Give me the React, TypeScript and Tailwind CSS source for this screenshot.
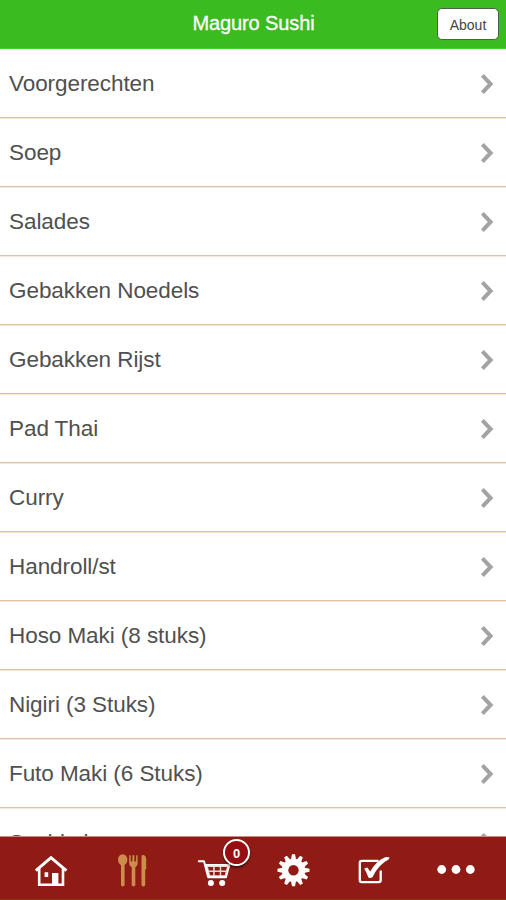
import React from 'react';

const categories = [
  'Voorgerechten',
  'Soep',
  'Salades',
  'Gebakken Noedels',
  'Gebakken Rijst',
  'Pad Thai',
  'Curry',
  'Handroll/st',
  'Hoso Maki (8 stuks)',
  'Nigiri (3 Stuks)',
  'Futo Maki (6 Stuks)',
  'Sashimi',
];

const gearTeeth = Array.from({ length: 12 }, (_, i) => i * 30);

const Chevron = () => (
  <svg width="14" height="22" viewBox="0 0 14 22" fill="none" stroke="#a3a3a3" strokeWidth="4">
    <path d="M2.4 2.4 10.6 11 2.4 19.6" />
  </svg>
);

const HomeIcon = () => (
  <svg width="41" height="40" viewBox="0 0 41 40" fill="none">
    <path d="M5.8 20.6 21 7.6 36.4 20.6" stroke="#fff" strokeWidth="3" />
    <path d="M9.2 18.5V34.8H33V18.5" stroke="#fff" strokeWidth="2.6" />
    <path d="M14.6 22.3h3.6v4.6h-3.6z M22 23h6.4v12.5H22z" fill="#fff" />
  </svg>
);

const UtensilsIcon = () => (
  <svg width="41" height="40" viewBox="0 0 41 40" fill="#cd8d4d">
    <ellipse cx="11.7" cy="9.8" rx="4.7" ry="5.6" />
    <rect x="10" y="13" width="3.6" height="23.4" rx="1.6" />
    <path d="M18.2 5.3h1.5v6.2h1.7V5.3h2v6.2h1.7V5.3h1.5v8c0 2-1 3.2-2.3 3.8v17.6c0 2.2-3.6 2.2-3.6 0V17.1c-1.4-.6-2.5-1.8-2.5-3.8z" />
    <path d="M30.5 6.5c0-1.2 1-1.6 2-1.5 1.7.2 2.7 2.2 2.7 4.5v9.5l-1 1v15c0 1.9-3.7 1.9-3.7 0z" />
  </svg>
);

const CartIcon = () => (
  <svg width="41" height="40" viewBox="0 0 41 40" fill="none" stroke="#fff" strokeLinecap="round" strokeLinejoin="round">
    <path d="M6.8 11.2h5.2l4.2 16h17.6" strokeWidth="2" />
    <path d="M13.6 14.8h24l-3.4 12.2H16.6z" strokeWidth="1.5" fill="#f3d9d6" />
    <path
      d="M16 17h5.2v3.5h-4.3z M22.7 17h5v3.5h-5z M29.2 17h5.8l-1 3.5h-4.8z M17.3 22h3.9v3.3h-3z M22.7 22h5v3.3h-5z M29.2 22h4.4l-.9 3.3h-3.5z"
      fill="#8f1b14"
      stroke="none"
    />
    <circle cx="18.9" cy="33" r="3" fill="#fff" stroke="none" />
    <circle cx="30.2" cy="33" r="3" fill="#fff" stroke="none" />
  </svg>
);

const GearIcon = () => (
  <svg width="41" height="40" viewBox="0 0 41 40">
    <g transform="translate(20.5 20.3)" fill="#fff">
      {gearTeeth.map((angle) => (
        <path key={angle} d="M-2.7-10-1.5-16h3L2.7-10z" transform={`rotate(${angle})`} />
      ))}
      <circle r="11.6" />
      <circle r="5.2" fill="#8f1b14" />
    </g>
  </svg>
);

const CheckIcon = () => (
  <svg width="41" height="40" viewBox="0 0 41 40" fill="none" stroke="#fff">
    <path d="M24.5 10.9H7.8Q5.8 10.9 5.8 12.9V30Q5.8 32.1 7.8 32.1H24.6Q26.7 32.1 26.7 30V20.5" strokeWidth="2.3" />
    <path d="M10.2 18.6 13.3 17.4 16.2 21.4Q22 11.2 30.5 7.4Q33 6.6 35.6 7.6L34.6 9.6Q25 14.2 18.4 27.2Q16.3 28.6 14.4 27.4Q12.9 23.2 10.2 18.6z" fill="#fff" stroke="none" />
  </svg>
);

const MoreIcon = () => (
  <svg width="41" height="40" viewBox="0 0 41 40" fill="#fff">
    <circle cx="6.7" cy="19.5" r="4.4" />
    <circle cx="21" cy="19.5" r="4.4" />
    <circle cx="35.3" cy="19.5" r="4.4" />
  </svg>
);

const App: React.FC = () => {
  return (
    <div className="flex h-[900px] w-[506px] flex-col overflow-hidden bg-white font-['Liberation_Sans',Arial,sans-serif]">
      <header className="grid h-[49px] shrink-0 grid-cols-[1fr_auto_1fr] items-center border-b border-[#39d526] bg-[#3abb20] pr-[7px]">
        <span />
        <h1 className="pb-[2px] pl-[8px] text-[20px] leading-6 tracking-[-0.005em] text-white [-webkit-text-stroke:0.3px_white]">Maguro Sushi</h1>
        <button className="flex h-[32px] w-[62px] items-center justify-center justify-self-end rounded-[5px] border border-[#4b6146] bg-white pt-[3px] text-[14px] text-[#444]">
          About
        </button>
      </header>

      <main className="min-h-0 flex-1 overflow-hidden">
        {categories.map((name) => (
          <div
            key={name}
            className="flex h-[69px] items-center justify-between border-b border-[#dfc1a4] pt-[2px] pr-[12px] pl-[9px] shadow-[0_1px_0_#f3e7dc]"
          >
            <span className="text-[22.5px] leading-7 tracking-[-0.003em] text-[#505050]">{name}</span>
            <Chevron />
          </div>
        ))}
      </main>

      <nav className="flex h-[64px] shrink-0 border-t border-b border-t-[#c58a88] border-b-[#84390f] bg-[#8f1b14] px-[10px] pt-[13px]">
        <div className="flex w-[81px] justify-center"><HomeIcon /></div>
        <div className="flex w-[81px] justify-center"><UtensilsIcon /></div>
        <div className="relative flex w-[81px] justify-center">
          <CartIcon />
          <span className="absolute -top-[11px] left-[51px] flex h-[27px] w-[27px] items-center justify-center rounded-full border-[2.5px] border-white bg-[#970d11] pt-[2px] text-[13px] font-bold text-white shadow-[0_2px_2px_rgba(0,0,0,0.5)]">
            0
          </span>
        </div>
        <div className="flex w-[81px] justify-center"><GearIcon /></div>
        <div className="flex w-[81px] justify-center"><CheckIcon /></div>
        <div className="flex w-[81px] justify-center"><MoreIcon /></div>
      </nav>
    </div>
  );
};

export default App;
